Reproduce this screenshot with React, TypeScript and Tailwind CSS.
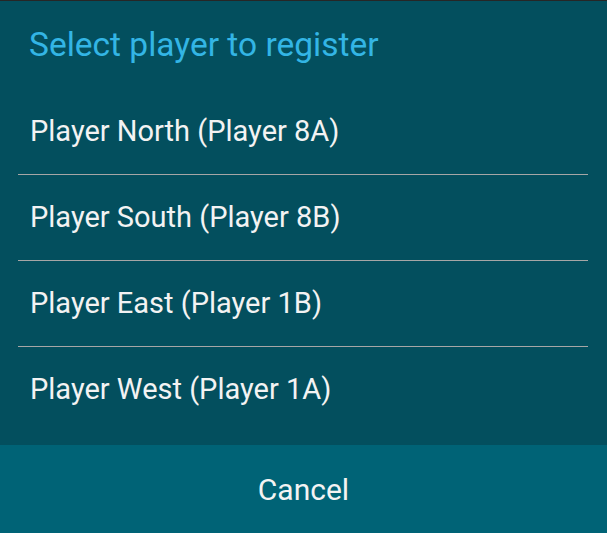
export default function App() {
  const players = [
    "Player North (Player 8A)",
    "Player South (Player 8B)",
    "Player East (Player 1B)",
    "Player West (Player 1A)",
  ];
  return (
    <div
      className="w-[607px] h-[533px] flex flex-col bg-[#034f5e] border-t border-[#262626] overflow-hidden"
      style={{ fontFamily: "Roboto, 'Liberation Sans', sans-serif" }}
    >
      <div className="h-[88px] flex items-center pl-[29px] text-[#33b5e5] text-[33.5px]">
        Select player to register
      </div>
      <ul className="flex flex-col">
        {players.map((p, i) => (
          <li key={p} className="flex flex-col">
            <div className="h-[85px] flex items-center pl-[30px] pt-[1px] text-[#f3f3f3] text-[29px]">{p}</div>
            {i < players.length - 1 && <div className="mx-[18px] mr-[19px] h-px bg-[#a6a6a6]" />}
          </li>
        ))}
      </ul>
      <div className="flex-1" />
      <button className="h-[88px] w-full bg-[#006376] text-[#f3f3f3] text-[30px]">Cancel</button>
    </div>
  );
}
